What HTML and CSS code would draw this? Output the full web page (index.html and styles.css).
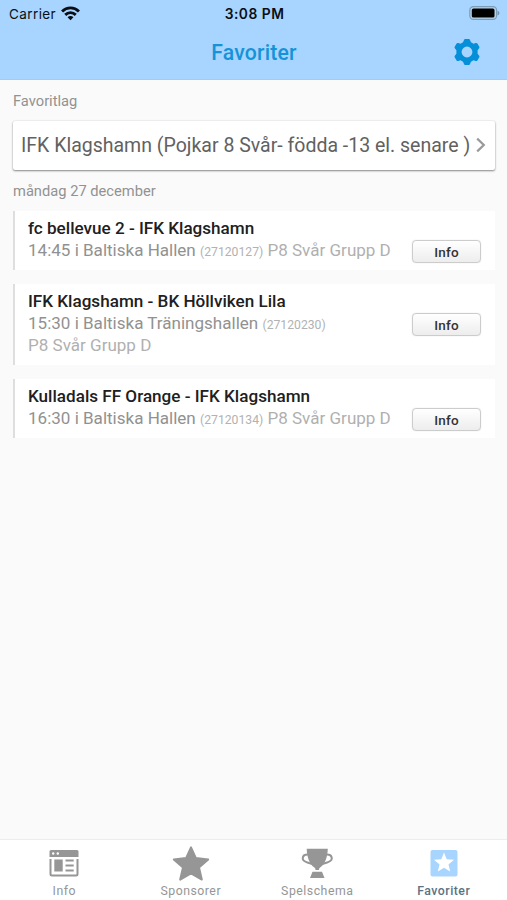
FILE: index.html
```html
<!DOCTYPE html>
<html lang="sv">
<head>
<meta charset="utf-8">
<title>Favoriter</title>
<link rel="stylesheet" href="styles.css">
</head>
<body>
<div class="app">
  <header class="header">
    <div class="status">
      <div class="carrier"><span>Carrier</span>
        <svg width="19" height="15" viewBox="0 0 18 14" fill="none" stroke="#0b0f14" stroke-width="2.700"><path d="M1 5.100C5.500.6 12.500.6 17 5.100M4 8.300c2.900-2.800 7.100-2.800 10 0"/><path d="M9 13.300 6.200 10.500c1.600-1.500 4-1.500 5.600 0z" fill="#0b0f14" stroke="none"/></svg>
      </div>
      <span class="clock">3:08 PM</span>
      <svg class="battery" width="31" height="14" viewBox="0 0 31 14"><rect x=".8" y=".6" width="26.800" height="12.800" rx="3.600" fill="#b4d3ec" stroke="#7c9db8" stroke-width="1.200"/><rect x="2.800" y="2.400" width="22.700" height="9.200" rx="1.700" fill="#000"/><path d="M28.600 4.700c2.300.8 2.300 3.800 0 4.600z" fill="#6f91ad"/></svg>
    </div>
    <div class="navbar">
      <h1 class="title">Favoriter</h1>
      <svg class="gear" width="26" height="28" viewBox="-13 -14 26 28"><path fill="#048fd8" fill-rule="evenodd" d="M-3-12Q-2.800-13-1.800-13H1.800Q2.800-13 3-12L4-9.800 6.500-8.300 8.700-9Q9.800-9.400 10.400-8.500L12.300-5.200Q12.800-4.300 12-3.600L10.600-1.800V1.800L12 3.600Q12.800 4.300 12.300 5.200L10.400 8.500Q9.800 9.400 8.700 9L6.500 8.300 4 9.800 3 12Q2.800 13 1.800 13H-1.800Q-2.800 13-3 12L-4 9.800-6.500 8.300-8.700 9Q-9.800 9.400-10.400 8.500L-12.300 5.200Q-12.800 4.300-12 3.600L-10.600 1.800V-1.800L-12-3.600Q-12.800-4.300-12.300-5.200L-10.400-8.500Q-9.800-9.400-8.700-9L-6.500-8.300-4-9.800zM0-5.400A5.400 5.400 0 1 0 0 5.400 5.400 5.400 0 1 0 0-5.400z"/></svg>
    </div>
  </header>
  <main class="content">
    <h2 class="label">Favoritlag</h2>
    <a class="team"><span>IFK Klagshamn (Pojkar 8 Svår- födda -13 el. senare )</span>
      <svg width="10" height="16" viewBox="0 0 10 16" fill="none" stroke="#999" stroke-width="2.200"><path d="m1.200 1.600 6.600 6.400-6.600 6.400"/></svg>
    </a>
    <h2 class="label label-date">måndag 27 december</h2>
    <article class="match">
      <div class="details"><h3 class="teams">fc bellevue 2 - IFK Klagshamn</h3>
        <p class="line"><span class="place">14:45 i Baltiska Hallen</span> <small>(27120127)</small> <span class="group">P8 Svår Grupp D</span></p></div>
      <button class="info">Info</button>
    </article>
    <article class="match">
      <div class="details"><h3 class="teams">IFK Klagshamn - BK Höllviken Lila</h3>
        <p class="line"><span class="place">15:30 i Baltiska Träningshallen</span> <small>(27120230)</small></p>
        <p class="line"><span class="group">P8 Svår Grupp D</span></p></div>
      <button class="info">Info</button>
    </article>
    <article class="match">
      <div class="details"><h3 class="teams">Kulladals FF Orange - IFK Klagshamn</h3>
        <p class="line"><span class="place">16:30 i Baltiska Hallen</span> <small>(27120134)</small> <span class="group">P8 Svår Grupp D</span></p></div>
      <button class="info">Info</button>
    </article>
  </main>
  <nav class="tabs">
    <a class="tab">
      <svg width="38" height="38" viewBox="0 0 38 38" fill="#969696"><path d="M6 6h26q1.500 0 1.500 1.500V13h-29V7.500Q4.500 6 6 6z"/><path d="M5.500 15v15q0 1.500 1.500 1.500h24q1.500 0 1.500-1.500V15" fill="none" stroke="#969696" stroke-width="2"/><path d="M9.300 15.500h8.400v12H9.300zM20.500 15.500h8.200v2h-8.200zM20.500 20.500h8.200v2h-8.200zM20.500 25.500h8.200v2h-8.200z"/><circle cx="8.200" cy="9.500" r="1.200" fill="#fff"/><circle cx="12.800" cy="9.500" r="1.200" fill="#fff"/></svg>
      <span>Info</span></a>
    <a class="tab">
      <svg width="38" height="38" viewBox="0 0 38 38" fill="#969696" stroke="#969696" stroke-width="2" stroke-linejoin="round"><path d="m19 3.400 4.900 10.700 12.300 1.300-9.200 8.200 2.800 12L19 29.300l-10.800 6.300 2.800-12-9.200-8.200 12.300-1.300z"/></svg>
      <span>Sponsorer</span></a>
    <a class="tab">
      <svg width="38" height="38" viewBox="0 0 38 38" fill="#969696"><path d="M8.700 4.700h21.100c-.3 8.500-2.700 15.300-7.400 18.500-1.300.9-1.500 1.700-1.300 2.800h-3.700c.2-1.100 0-1.900-1.300-2.800C11.400 20 9 13.200 8.700 4.700z"/><path d="M12 10.800C3.500 9.300 2.800 16 8.400 18.100c2 .8 4.100 1.100 5.700 2M26.500 10.800c8.500-1.500 9.200 5.200 3.600 7.300-2 .8-4.100 1.100-5.700 2" fill="none" stroke="#969696" stroke-width="2"/><path d="M14.500 27.800h9.500l2.500 6.200H12z"/></svg>
      <span>Spelschema</span></a>
    <a class="tab active">
      <svg width="38" height="38" viewBox="0 0 38 38"><rect x="5.500" y="6" width="27" height="26.500" rx="2" fill="#a7d5ff"/><path fill="#fff" d="m19 8.500 2.700 6.700 7.300.6-5.500 4.700 1.700 7.100L19 23.800l-6.200 3.800 1.700-7.100-5.500-4.700 7.300-.6z"/></svg>
      <span>Favoriter</span></a>
  </nav>
</div>
</body>
</html>
```
FILE: styles.css
```css
* { box-sizing: border-box; }
body { margin: 0; font-family: Roboto, "Liberation Sans", sans-serif; background: #fafafa; }
h1, h2, h3, p { margin: 0; font-weight: 400; }
svg { display: block; flex: none; }
.app { height: 900px; display: flex; flex-direction: column; }
.header { height: 80px; background: #a7d5ff; border-bottom: 1px solid #a5cce8; }
.status { height: 28px; display: grid; grid-template-columns: 1fr auto 1fr; align-items: center; padding: 0 7px 0 9px; font-family: Inter, sans-serif; color: #0b0f14; }
.carrier { display: flex; align-items: center; gap: 5px; font-size: 13.5px; letter-spacing: .4px; }
.carrier svg { margin-top: -2px; }
.clock { font-size: 13.8px; font-weight: 600; letter-spacing: .5px; }
.battery { justify-self: end; margin-top: -2px; }
.navbar { height: 48px; display: grid; grid-template-columns: 1fr auto 1fr; align-items: center; padding-right: 27px; padding-left: 28px; }
.title { grid-column: 2; font-size: 21.2px; font-weight: 500; letter-spacing: .2px; color: #1593d8; }
.gear { justify-self: end; }
.content { flex: 1; padding: 12px 12px 0 13px; }
.label { font-size: 14.7px; line-height: 18px; color: #929292; }
.team { display: flex; align-items: center; justify-content: space-between; height: 49px; margin-top: 11px; padding: 0 9px 1px 8px; background: #fff; border-radius: 2px; box-shadow: 0 1px 2px #888, 0 0 2px #ddd; color: #616161; font-size: 19.5px; white-space: nowrap; }
.label-date { margin-top: 12px; margin-bottom: 11px; }
.match { display: flex; align-items: flex-start; justify-content: space-between; margin-bottom: 14px; padding: 6px 14px 9px 13px; background: #fff; border-left: 2px solid #dedede; }
.details { white-space: nowrap; }
.teams { font-size: 17.1px; line-height: 22px; font-weight: 500; color: #202020; }
.line { font-size: 17.05px; line-height: 22px; color: #919191; }
.line small { font-size: 12.2px; line-height: 0; color: #b2b2b2; }
.group { color: #b0b0b0; }
.info { flex: none; width: 69px; height: 23px; margin-top: 23px; margin-bottom: -2px; padding: 0; border: 1px solid #ccc; border-radius: 4px; background: linear-gradient(#fff, #ededed); box-shadow: 0 0 1px #ccc; font: 500 13.5px Roboto, sans-serif; letter-spacing: .2px; color: #333; }
.tabs { height: 61px; display: grid; grid-template-columns: repeat(4, 1fr); padding-left: 1px; background: #fff; border-top: 1px solid #ededed; }
.tab { display: flex; flex-direction: column; align-items: center; padding-top: 4px; font-size: 12.3px; line-height: 18px; letter-spacing: .5px; color: #969696; }
.tab.active { color: #5a7384; font-weight: 500; }
```
